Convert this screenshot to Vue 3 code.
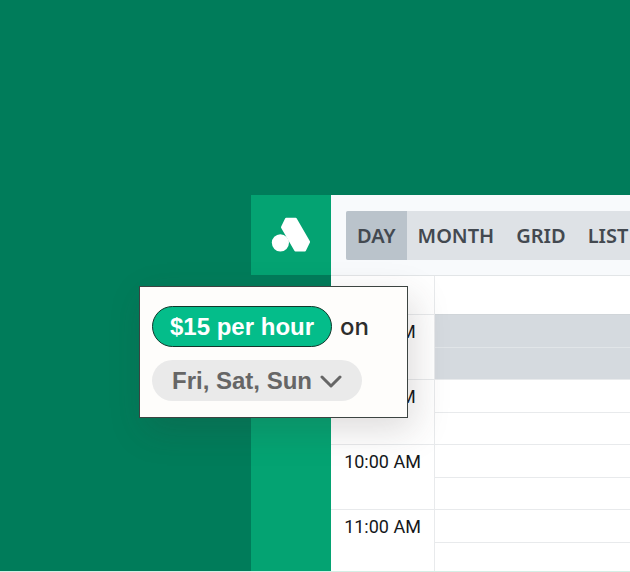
<script setup>
import { ref } from 'vue'

const views = ['DAY', 'MONTH', 'GRID', 'LIST']
const activeView = ref('DAY')
const hours = [
  { label: '8:00 AM', selected: true },
  { label: '9:00 AM', selected: false },
  { label: '10:00 AM', selected: false },
  { label: '11:00 AM', selected: false },
]
</script>

<template>
  <main class="stage">
    <section class="window">
      <aside class="sidebar">
        <a class="logo" href="#" aria-label="Home">
          <svg viewBox="0 0 40 36" width="40" height="36" aria-hidden="true">
            <circle cx="9.4" cy="25.8" r="8.6" />
            <path d="M15.2 .8h9.5q.6 0 .9.5l13.3 23q.4.7 0 1.3l-4 8.2q-.3.6-.9.6h-9.6q-.7 0-1-.6l-13.2-22.9q-.4-.6 0-1.3l3.9-8.2q.3-.6 1.1-.6z" />
          </svg>
        </a>
        <div class="current"></div>
      </aside>
      <div class="content">
        <header class="toolbar">
          <nav class="tabs">
            <button
              v-for="view in views"
              :key="view"
              type="button"
              class="tab"
              :class="{ active: view === activeView }"
              @click="activeView = view"
            >{{ view }}</button>
          </nav>
        </header>
        <table class="schedule">
          <tbody>
            <tr class="top"><td class="corner"></td><td></td></tr>
          </tbody>
          <tbody v-for="hour in hours" :key="hour.label" :class="{ selected: hour.selected }">
            <tr class="first">
              <th rowspan="2" scope="rowgroup">{{ hour.label }}</th>
              <td class="slot"></td>
            </tr>
            <tr class="second"><td class="slot half"></td></tr>
          </tbody>
        </table>
      </div>
    </section>

    <section class="rule">
      <div class="line">
        <button type="button" class="pill rate">$15 per hour</button>
        <span class="on">on</span>
      </div>
      <div class="line">
        <button type="button" class="pill days">
          Fri, Sat, Sun
          <svg viewBox="0 0 22 14" width="22" height="14" aria-hidden="true">
            <path d="M2 3l9 9 9-9" />
          </svg>
        </button>
      </div>
    </section>
  </main>
</template>

<style>
body {
  margin: 0;
}
</style>

<style scoped>
.stage {
  position: relative;
  box-sizing: border-box;
  height: 100vh;
  padding: 195px 0 0 251px;
  overflow: hidden;
  background: #007c5a;
  border-bottom: 1px solid #d5eee5;
}
.window {
  display: flex;
  height: 100%;
}
.sidebar {
  flex: none;
  width: 80px;
  background: #04a372;
}
.logo {
  display: flex;
  align-items: center;
  justify-content: center;
  height: 80px;
}
.logo svg {
  fill: #fff;
}
.current {
  height: 80px;
  background: #007c5a;
}
.content {
  flex: 1;
  min-width: 0;
  overflow: hidden;
  background: #fff;
}
.toolbar {
  box-sizing: border-box;
  height: 81px;
  padding: 16px 0 0 15px;
  background: #f8fafc;
  border-bottom: 1px solid #e2e5e7;
}
.tabs {
  display: flex;
  width: max-content;
  height: 49px;
  border-radius: 2px;
  overflow: hidden;
  background: #dee2e6;
}
.tab {
  padding: 0 11px;
  border: 0;
  background: transparent;
  color: #434950;
  font: 600 20px "Noto Sans", sans-serif;
}
.tab.active {
  background: #bac3cb;
}
.schedule {
  width: 100%;
  table-layout: fixed;
  border-spacing: 0;
}
.schedule th,
.schedule td {
  box-sizing: border-box;
  padding: 0;
}
.schedule .corner,
.schedule th {
  width: 104px;
  border-right: 1px solid #e8eaec;
}
.top {
  height: 38px;
}
.schedule th {
  padding-top: 5px;
  border-top: 1px solid #e8eaec;
  vertical-align: top;
  text-align: center;
  color: #15171a;
  font: 400 18px/24px Roboto, sans-serif;
}
.first {
  height: 33px;
}
.second {
  height: 32px;
}
.slot {
  border-top: 1px solid #e8eaec;
}
.selected .slot {
  background: #d5dadf;
  border-top-color: #d0d5d9;
}
.selected .half {
  border-top-color: #e1e5e8;
}
.rule {
  position: absolute;
  left: 139px;
  top: 286px;
  box-sizing: border-box;
  display: flex;
  flex-direction: column;
  gap: 13px;
  width: 269px;
  padding: 19px 12px 16px;
  background: #fefdfb;
  border: 1px solid #3c4441;
  box-shadow: 6px 12px 34px rgba(60, 50, 50, 0.17);
}
.line {
  display: flex;
  align-items: center;
  gap: 8px;
}
.pill {
  box-sizing: border-box;
  display: flex;
  align-items: center;
  height: 41px;
  border-radius: 21px;
  font: 700 24px "Liberation Sans", sans-serif;
}
.rate {
  padding: 0 17px;
  border: 1px solid #11372b;
  background: #04bd8a;
  color: #fff;
}
.days {
  gap: 8px;
  padding: 0 20px;
  border: 0;
  background: #eaeaea;
  color: #666;
}
.days svg {
  fill: none;
  stroke: #666;
  stroke-width: 3;
  stroke-linecap: round;
  stroke-linejoin: round;
}
.on {
  color: #2d2d2d;
  font: 500 24px Inter, sans-serif;
}
</style>
